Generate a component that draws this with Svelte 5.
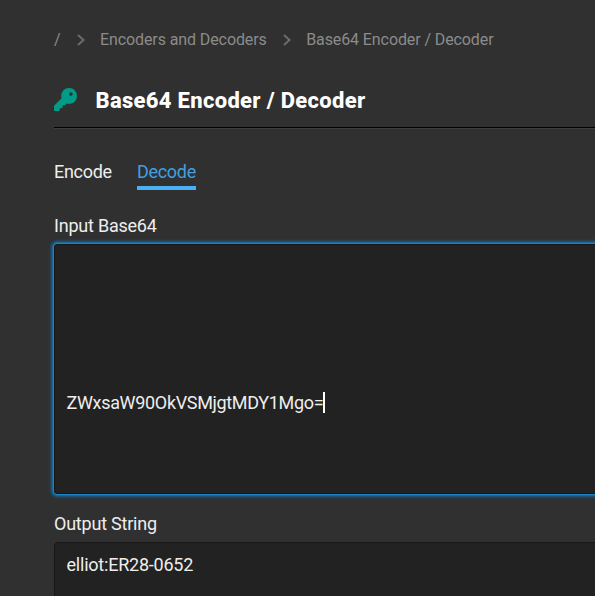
<script>
  const crumbs = ['Encoders and Decoders', 'Base64 Encoder / Decoder'];
  let tab = $state('Decode');
</script>

<main>
  <nav class="crumbs">
    <span class="root">/</span>
    {#each crumbs as crumb}
      <svg class="chev" viewBox="0 0 8 12"><path d="M1 1l5.5 5L1 11" /></svg>
      <span class="crumb">{crumb}</span>
    {/each}
  </nav>

  <header>
    <svg class="key" viewBox="0 0 512 512"><path d="M336 352c97.2 0 176-78.8 176-176S433.2 0 336 0S160 78.8 160 176c0 18.7 2.9 36.8 8.3 53.7L7 391c-4.5 4.5-7 10.6-7 17v80c0 13.3 10.7 24 24 24h80c13.3 0 24-10.7 24-24V448h40c13.3 0 24-10.7 24-24V384h40c6.4 0 12.5-2.5 17-7l33.3-33.3c16.9 5.4 35 8.3 53.7 8.3zM376 96a40 40 0 1 1 0 80 40 40 0 1 1 0-80z" /></svg>
    <h1>Base64 Encoder / Decoder</h1>
  </header>

  <div class="tabs">
    {#each ['Encode', 'Decode'] as name}
      <button class:active={tab === name} onclick={() => (tab = name)}>{name}</button>
    {/each}
  </div>

  <div class="label">Input Base64</div>
  <div class="field input"><span class="code">ZWxsaW90OkVSMjgtMDY1Mgo=</span><i class="caret"></i></div>

  <div class="label out-label">Output String</div>
  <div class="field output"><span>elliot:ER28-0652</span></div>
</main>

<style>
  :global(body) { margin: 0; background: #303030; overflow: hidden; }
  main {
    box-sizing: border-box;
    height: 596px;
    padding: 28px 0 0 54px;
    overflow: hidden;
    background: #303030;
    color: #eee;
    font: 18px/24px Roboto, sans-serif;
    letter-spacing: -0.22px;
  }
  .crumbs { display: flex; align-items: center; height: 24px; font-size: 16px; letter-spacing: -0.1px; color: #8b8b8b; }
  .root { width: 22.5px; }
  .chev { width: 8px; height: 12px; margin-right: 15.5px; fill: none; stroke: #6c6c6c; stroke-width: 2; }
  .crumb { margin-right: 16px; white-space: nowrap; }
  header { display: flex; align-items: center; height: 55px; margin-top: 20px; border-bottom: 1px solid #000; box-shadow: 0 1px #3d3d3d; }
  .key { width: 23px; height: 23px; margin-right: 18.5px; fill: #009c87; }
  h1 { margin: 0; padding-top: 2px; font-size: 22px; line-height: 28px; font-weight: 800; letter-spacing: 0.31px; color: #fff; white-space: nowrap; }
  .tabs { display: flex; gap: 25px; margin-top: 32px; height: 30px; }
  button { display: block; padding: 0 0 2px; border: 0; border-bottom: 4px solid transparent; background: none; color: inherit; font: inherit; letter-spacing: -0.28px; height: 30px; }
  button.active { color: #41a0e0; border-color: #4bb0f3; }
  .label { margin-top: 24px; height: 24px; }
  .field { box-sizing: border-box; display: flex; background: #222; border-radius: 4px 0 0 4px; }
  .input { height: 252px; margin: 5px -5px 0 -1px; padding: 147px 12px 0 12.5px; border: 1px solid #1b84c4; box-shadow: 0 0 0 1px #1c6697, 0 0 3px 2px #1c5f8d, inset 0 0 0 1px #161616; }
  .code { letter-spacing: -0.33px; }
  .caret { width: 2px; height: 21px; margin-top: 1px; background: #fff; }
  .out-label { margin-top: 17px; }
  .output { height: 80px; margin: 6px -5px 0 0; padding: 10px 11.5px; border: 1px solid #171717; }
</style>
